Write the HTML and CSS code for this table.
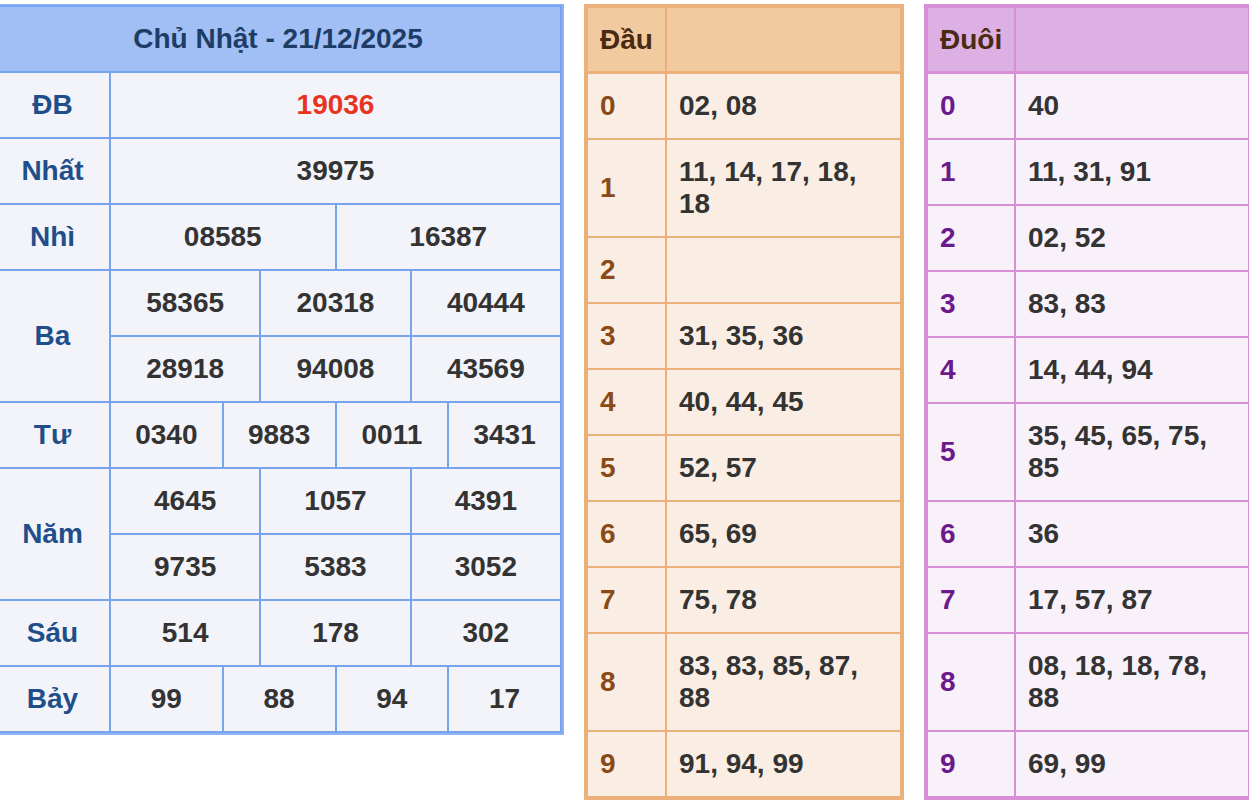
FILE: index.html
```html
<!DOCTYPE html>
<html lang="vi">
<head>
<meta charset="utf-8">
<title>Kết quả xổ số - Chủ Nhật 21/12/2025</title>
<link rel="stylesheet" href="styles.css">
</head>
<body>
<div class="page">
  <div class="kq">
    <div class="kq-head">Chủ Nhật - 21/12/2025</div>

    <div class="kq-label">ĐB</div>
    <div class="kq-val s12 db">19036</div>

    <div class="kq-label">Nhất</div>
    <div class="kq-val s12">39975</div>

    <div class="kq-label">Nhì</div>
    <div class="kq-val s6">08585</div>
    <div class="kq-val s6">16387</div>

    <div class="kq-label r2">Ba</div>
    <div class="kq-val s4">58365</div>
    <div class="kq-val s4">20318</div>
    <div class="kq-val s4">40444</div>
    <div class="kq-val s4">28918</div>
    <div class="kq-val s4">94008</div>
    <div class="kq-val s4">43569</div>

    <div class="kq-label">Tư</div>
    <div class="kq-val s3">0340</div>
    <div class="kq-val s3">9883</div>
    <div class="kq-val s3">0011</div>
    <div class="kq-val s3">3431</div>

    <div class="kq-label r2">Năm</div>
    <div class="kq-val s4">4645</div>
    <div class="kq-val s4">1057</div>
    <div class="kq-val s4">4391</div>
    <div class="kq-val s4">9735</div>
    <div class="kq-val s4">5383</div>
    <div class="kq-val s4">3052</div>

    <div class="kq-label">Sáu</div>
    <div class="kq-val s4">514</div>
    <div class="kq-val s4">178</div>
    <div class="kq-val s4">302</div>

    <div class="kq-label">Bảy</div>
    <div class="kq-val s3">99</div>
    <div class="kq-val s3">88</div>
    <div class="kq-val s3">94</div>
    <div class="kq-val s3">17</div>
  </div>

  <div class="lt dau">
    <div class="lt-head">Đầu</div>
    <div class="lt-head"></div>
    <div class="lt-key">0</div><div class="lt-val">02, 08</div>
    <div class="lt-key">1</div><div class="lt-val">11, 14, 17, 18, 18</div>
    <div class="lt-key">2</div><div class="lt-val"></div>
    <div class="lt-key">3</div><div class="lt-val">31, 35, 36</div>
    <div class="lt-key">4</div><div class="lt-val">40, 44, 45</div>
    <div class="lt-key">5</div><div class="lt-val">52, 57</div>
    <div class="lt-key">6</div><div class="lt-val">65, 69</div>
    <div class="lt-key">7</div><div class="lt-val">75, 78</div>
    <div class="lt-key">8</div><div class="lt-val">83, 83, 85, 87, 88</div>
    <div class="lt-key">9</div><div class="lt-val">91, 94, 99</div>
  </div>

  <div class="lt duoi">
    <div class="lt-head">Đuôi</div>
    <div class="lt-head"></div>
    <div class="lt-key">0</div><div class="lt-val">40</div>
    <div class="lt-key">1</div><div class="lt-val">11, 31, 91</div>
    <div class="lt-key">2</div><div class="lt-val">02, 52</div>
    <div class="lt-key">3</div><div class="lt-val">83, 83</div>
    <div class="lt-key">4</div><div class="lt-val">14, 44, 94</div>
    <div class="lt-key">5</div><div class="lt-val">35, 45, 65, 75, 85</div>
    <div class="lt-key">6</div><div class="lt-val">36</div>
    <div class="lt-key">7</div><div class="lt-val">17, 57, 87</div>
    <div class="lt-key">8</div><div class="lt-val">08, 18, 18, 78, 88</div>
    <div class="lt-key">9</div><div class="lt-val">69, 99</div>
  </div>
</div>
</body>
</html>
```

FILE: styles.css
```css
html, body {
  margin: 0;
  padding: 0;
  overflow: hidden;
  background: #ffffff;
}

body {
  font-family: "Liberation Sans", Arial, Helvetica, sans-serif;
  font-weight: 700;
  font-size: 28px;
  line-height: 32px;
  color: #333333;
}

.page {
  display: flex;
  align-items: flex-start;
  gap: 20px;
  padding-top: 4px;
  margin-left: -8px;
  width: 1300px;
}

/* ---------- Result table ---------- */
.kq {
  flex: none;
  box-sizing: border-box;
  width: 572px;
  display: grid;
  grid-template-columns: 113px repeat(12, 1fr);
  grid-auto-rows: 64px;
  gap: 2px;
  padding: 2px;
  border: 2px solid #8fb4f3;
  border-top-width: 1px;
  background: #78a4ef;
}

.kq-head {
  grid-column: 1 / -1;
  background: #a1bef5;
  color: #1d3d66;
  display: flex;
  align-items: center;
  justify-content: center;
}

.kq-label,
.kq-val {
  background: #f3f4f9;
  display: flex;
  align-items: center;
  justify-content: center;
}

.kq-label {
  color: #1f4f8b;
}

.kq-label.r2 { grid-row: span 2; }

.s12 { grid-column: span 12; }
.s6 { grid-column: span 6; }
.s4 { grid-column: span 4; }
.s3 { grid-column: span 3; }

.kq-val.db { color: #e8341f; }

/* ---------- Lô tô tables ---------- */
.lt {
  flex: none;
  box-sizing: border-box;
  display: grid;
  gap: 2px;
  padding: 4px;
  grid-auto-rows: minmax(64px, auto);
}

.lt.dau {
  width: 320px;
  grid-template-columns: 77px 1fr;
  background: #ecb07a;
}

.lt.duoi {
  width: 328px;
  grid-template-columns: 86px 1fr;
  background: #d98fd7;
}

.lt-head {
  height: 63px;
  display: flex;
  align-items: center;
  padding: 0 12px;
  color: #4a2a12;
}

.lt-key {
  display: flex;
  align-items: center;
  padding: 0 12px;
}

.lt-val {
  padding: 16px 12px;
  color: #333333;
}

.dau .lt-head { background: #f2caa0; }
.dau .lt-key, .dau .lt-val { background: #faeee4; }
.dau .lt-key { color: #8a4a17; }

.duoi .lt-head { background: #ddb0e4; }
.duoi .lt-key, .duoi .lt-val { background: #f9f1fa; }
.duoi .lt-key { color: #6b1a8c; }
```
